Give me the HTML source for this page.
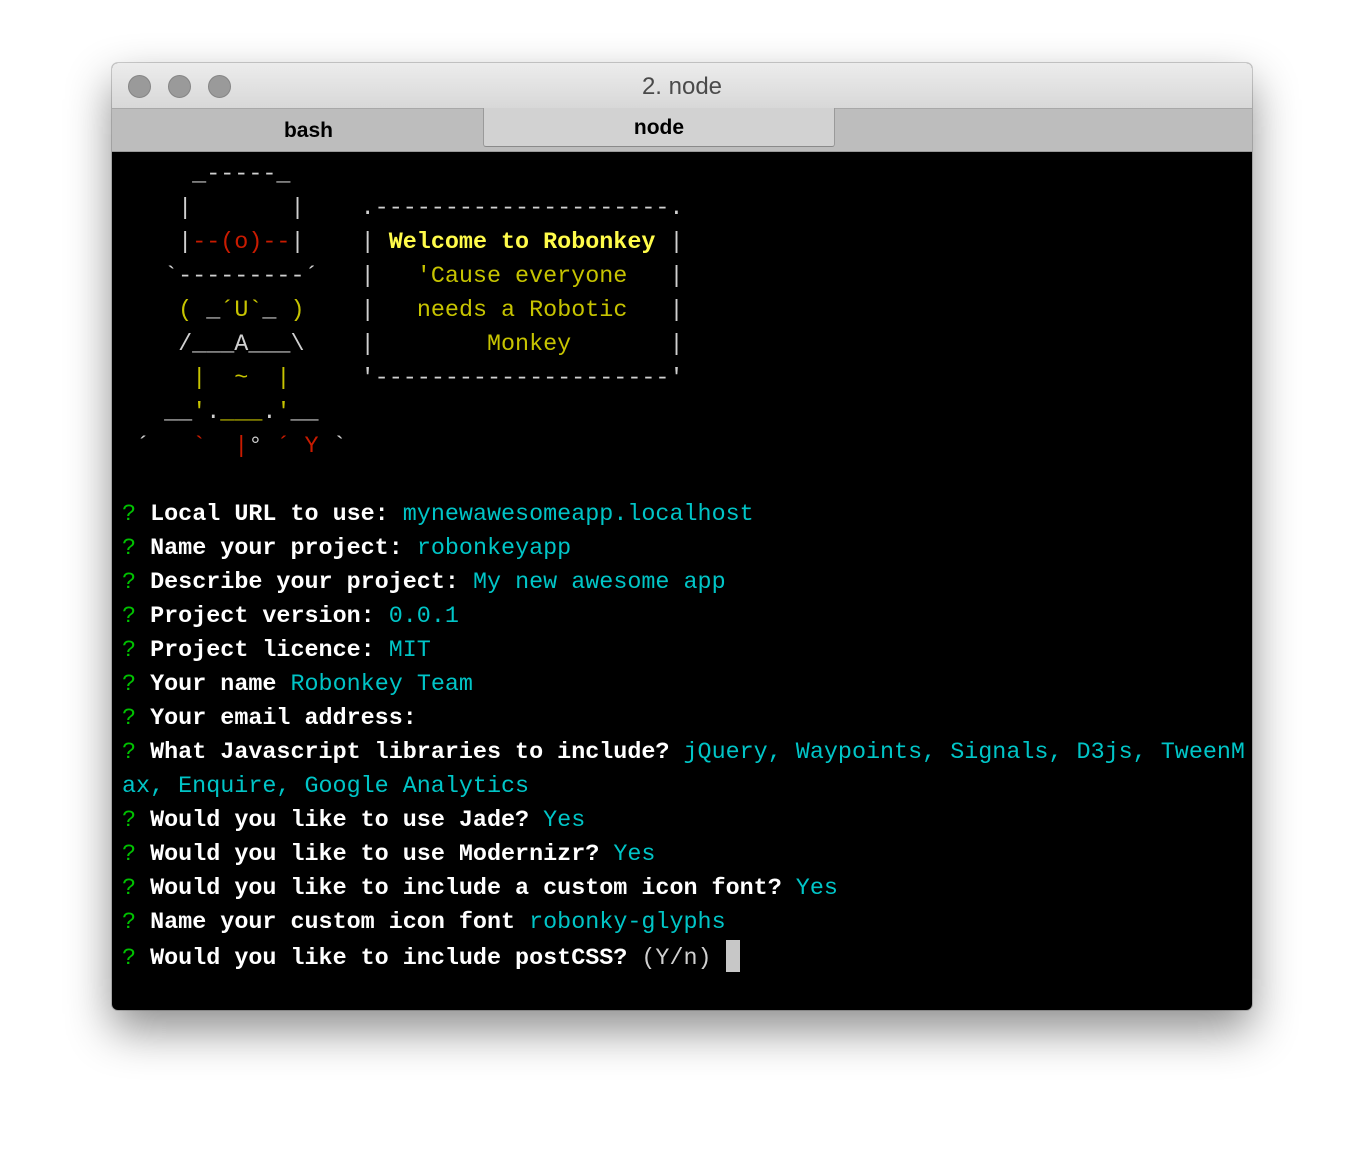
<!DOCTYPE html>
<html><head><meta charset="utf-8"><style>
html,body{margin:0;padding:0;background:#fff;width:1364px;height:1170px;overflow:hidden}
.win{position:absolute;left:112px;top:63px;width:1140px;height:947px;border-radius:6px;overflow:hidden;background:#000;box-shadow:0 20px 45px rgba(0,0,0,.45),0 0 0 1px rgba(0,0,0,.18)}
.title{position:absolute;left:0;top:0;width:1140px;height:45px;background:linear-gradient(#ececec,#d8d8d8);font:24px "Liberation Sans",sans-serif;color:#4a4a4a;text-align:center;line-height:48px}
.dot{position:absolute;top:12px;width:23px;height:23px;border-radius:50%;background:#9a9a9a;border:1px solid #858585;box-sizing:border-box}
.tabs{position:absolute;left:0;top:45px;width:1140px;height:44px;background:#bdbdbd;border-top:1px solid #a8a8a8;border-bottom:1px solid #9a9a9a;box-sizing:border-box}
.tab{position:absolute;top:0;height:42px;font:bold 21px "Liberation Sans",sans-serif;color:#000;text-align:center;line-height:44px}
.t2{left:371px;width:350px;background:#d2d2d2;border-left:1px solid #9a9a9a;border-right:1px solid #9a9a9a;border-bottom:1px solid #8a8a8a;top:-1px;height:38px;line-height:40px;border-radius:0 0 3px 3px}
pre{position:absolute;left:10px;top:95px;margin:0;font:23.4px/34px "Liberation Mono",monospace;color:#d0d0d0;white-space:pre}
.r{color:#c91b00}.y{color:#c7c400}.Y{color:#fffb4a;font-weight:bold}.g{color:#00c200}.c{color:#00c5c7}.w{color:#fff;font-weight:bold}
.cur{display:inline-block;width:14px;height:32px;background:#c7c7c7;vertical-align:-8px}
</style></head><body>
<div class="win">
<div class="title"><div class="dot" style="left:16px"></div><div class="dot" style="left:56px"></div><div class="dot" style="left:96px"></div>2. node</div>
<div class="tabs"><div class="tab" style="left:11px;width:371px">bash</div><div class="tab t2">node</div></div>
<pre>     _-----_
    |       |    .---------------------.
    |<span class="r">--(o)--</span>|    | <span class="Y">Welcome to Robonkey</span> |
   `---------´   |   <span class="y">'Cause everyone</span>   |
    <span class="y">( </span>_<span class="y">´U`</span>_<span class="y"> )</span>    |   <span class="y">needs a Robotic</span>   |
    /___A___\    |        <span class="y">Monkey</span>       |
     <span class="y">|  ~  |</span>     '---------------------'
   __<span class="y">'</span>.<span class="y">___</span>.<span class="y">'</span>__
 ´   <span class="r">`  |</span>° <span class="r">´ Y</span> `

<span class="g">?</span> <span class="w">Local URL to use:</span> <span class="c">mynewawesomeapp.localhost</span>
<span class="g">?</span> <span class="w">Name your project:</span> <span class="c">robonkeyapp</span>
<span class="g">?</span> <span class="w">Describe your project:</span> <span class="c">My new awesome app</span>
<span class="g">?</span> <span class="w">Project version:</span> <span class="c">0.0.1</span>
<span class="g">?</span> <span class="w">Project licence:</span> <span class="c">MIT</span>
<span class="g">?</span> <span class="w">Your name</span> <span class="c">Robonkey Team</span>
<span class="g">?</span> <span class="w">Your email address:</span>
<span class="g">?</span> <span class="w">What Javascript libraries to include?</span> <span class="c">jQuery, Waypoints, Signals, D3js, TweenM</span>
<span class="c">ax, Enquire, Google Analytics</span>
<span class="g">?</span> <span class="w">Would you like to use Jade?</span> <span class="c">Yes</span>
<span class="g">?</span> <span class="w">Would you like to use Modernizr?</span> <span class="c">Yes</span>
<span class="g">?</span> <span class="w">Would you like to include a custom icon font?</span> <span class="c">Yes</span>
<span class="g">?</span> <span class="w">Name your custom icon font</span> <span class="c">robonky-glyphs</span>
<span class="g">?</span> <span class="w">Would you like to include postCSS?</span> (Y/n) <span class="cur"></span></pre>
</div>
</body></html>
